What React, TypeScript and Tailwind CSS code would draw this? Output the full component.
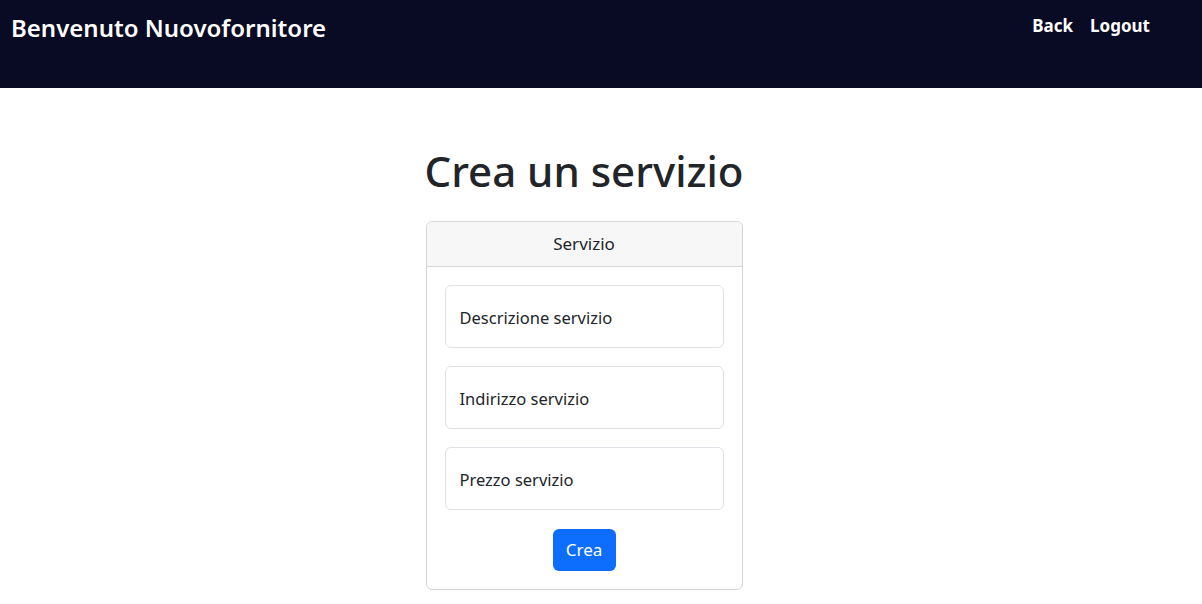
import React from 'react';

const fields = ['Descrizione servizio', 'Indirizzo servizio', 'Prezzo servizio'];

export default function App() {
  return (
    <div className="min-h-[604px] bg-white text-[#212529] font-['Noto_Sans','Open_Sans',sans-serif]">
      <nav className="h-[88px] bg-[#090a23] flex items-start justify-between pl-[11px] pr-[52px]">
        <h1 className="text-white text-[24px] font-semibold leading-none mt-[16px]">Benvenuto Nuovofornitore</h1>
        <div className="flex gap-[17px] mt-[17px]">
          <a className="text-white text-[17px] font-bold leading-none">Back</a>
          <a className="text-white text-[17px] font-bold leading-none">Logout</a>
        </div>
      </nav>

      <main className="flex flex-col items-center mr-[34px]">
        <h2 className="text-[42px] font-medium leading-none mt-[62px] mb-[29px]">Crea un servizio</h2>

        <div className="w-[317px] border border-[#d6d6d6] rounded-[6px]">
          <div className="h-[45px] bg-[#f7f7f7] border-b border-[#d6d6d6] rounded-t-[6px] flex items-center justify-center text-[17px]">
            Servizio
          </div>
          <div className="px-[18px] pt-[18px] pb-[18px] flex flex-col gap-[18px] items-center">
            {fields.map((f) => (
              <div
                key={f}
                className="w-full h-[63px] border border-[#dee2e6] rounded-[6px] flex items-center px-[14px] pt-[3px] text-[16.5px]"
              >
                {f}
              </div>
            ))}
            <button className="h-[42px] w-[63px] bg-[#0d6efd] text-white text-[17px] rounded-[6px] mt-[1px]">Crea</button>
          </div>
        </div>
      </main>
    </div>
  );
}
